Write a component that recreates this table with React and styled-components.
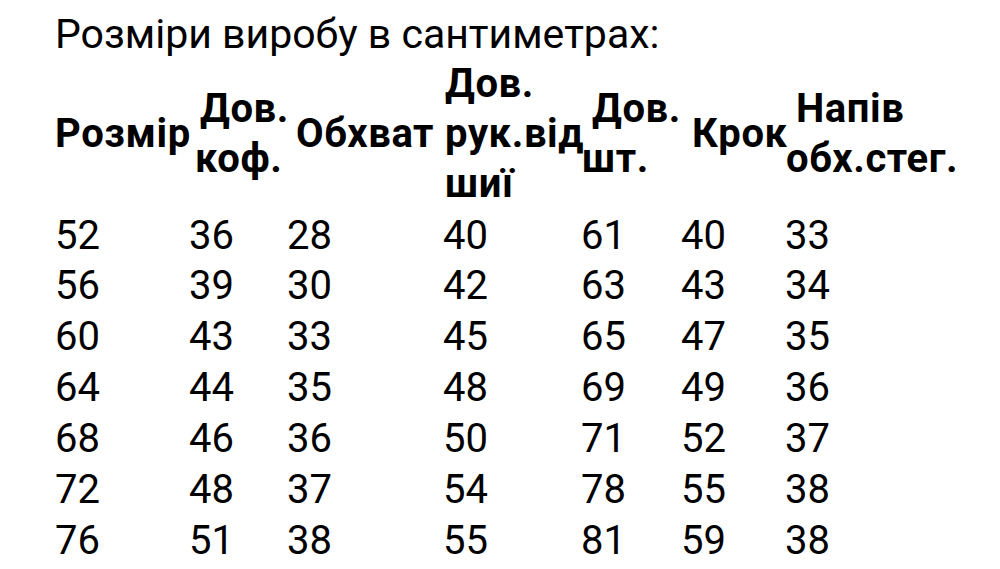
import React from 'react';
import styled, { createGlobalStyle } from 'styled-components';

const GlobalStyle = createGlobalStyle`
  body {
    margin: 0;
    background: #fff;
    font-family: Roboto, "Noto Sans", sans-serif;
    color: #000;
  }
`;

const Page = styled.div`
  padding: 9px 0 0 55px;
`;

const Title = styled.h1`
  margin: 0;
  font-size: 41px;
  font-weight: 400;
  line-height: 50px;
`;

const SizeTable = styled.div`
  display: grid;
  grid-template-columns: 134px 98px 156px 138px 100px 104px 1fr;
  grid-template-rows: 150px;
  grid-auto-rows: 51px;
  align-items: center;
`;

const HeadCell = styled.div`
  font-size: 40px;
  font-weight: 700;
  line-height: 50px;
  letter-spacing: 0.6px;
  padding-left: ${p => p.$pad || 0}px;
  text-indent: ${p => p.$indent || 0}px;
  white-space: nowrap;
`;

const DataCell = styled.div`
  font-size: 40px;
  line-height: 51px;
  margin-top: ${p => (p.$first ? 2 : 0)}px;
`;

const columns = [
  { lines: ['Розмір'], pad: 0, indent: 0 },
  { lines: ['Дов.', 'коф.'], pad: 6, indent: 5 },
  { lines: ['Обхват'], pad: 9, indent: 0 },
  { lines: ['Дов.', 'рук.від', 'шиї'], pad: 2, indent: 0 },
  { lines: ['Дов.', 'шт.'], pad: 1, indent: 10 },
  { lines: ['Крок'], pad: 11, indent: 0 },
  { lines: ['Напів', 'обх.стег.'], pad: 1, indent: 10 },
];

const rows = [
  [52, 36, 28, 40, 61, 40, 33],
  [56, 39, 30, 42, 63, 43, 34],
  [60, 43, 33, 45, 65, 47, 35],
  [64, 44, 35, 48, 69, 49, 36],
  [68, 46, 36, 50, 71, 52, 37],
  [72, 48, 37, 54, 78, 55, 38],
  [76, 51, 38, 55, 81, 59, 38],
];

const App = () => (
  <>
    <GlobalStyle />
    <Page>
      <Title>Розміри виробу в сантиметрах:</Title>
      <SizeTable>
        {columns.map((col, i) => (
          <HeadCell key={i} $pad={col.pad} $indent={col.indent}>
            {col.lines.map((line, j) => (
              <React.Fragment key={j}>
                {j > 0 && <br />}
                {line}
              </React.Fragment>
            ))}
          </HeadCell>
        ))}
        {rows.map((row, r) =>
          row.map((value, c) => (
            <DataCell key={`${r}-${c}`} $first={r === 0}>
              {value}
            </DataCell>
          ))
        )}
      </SizeTable>
    </Page>
  </>
);

export default App;
